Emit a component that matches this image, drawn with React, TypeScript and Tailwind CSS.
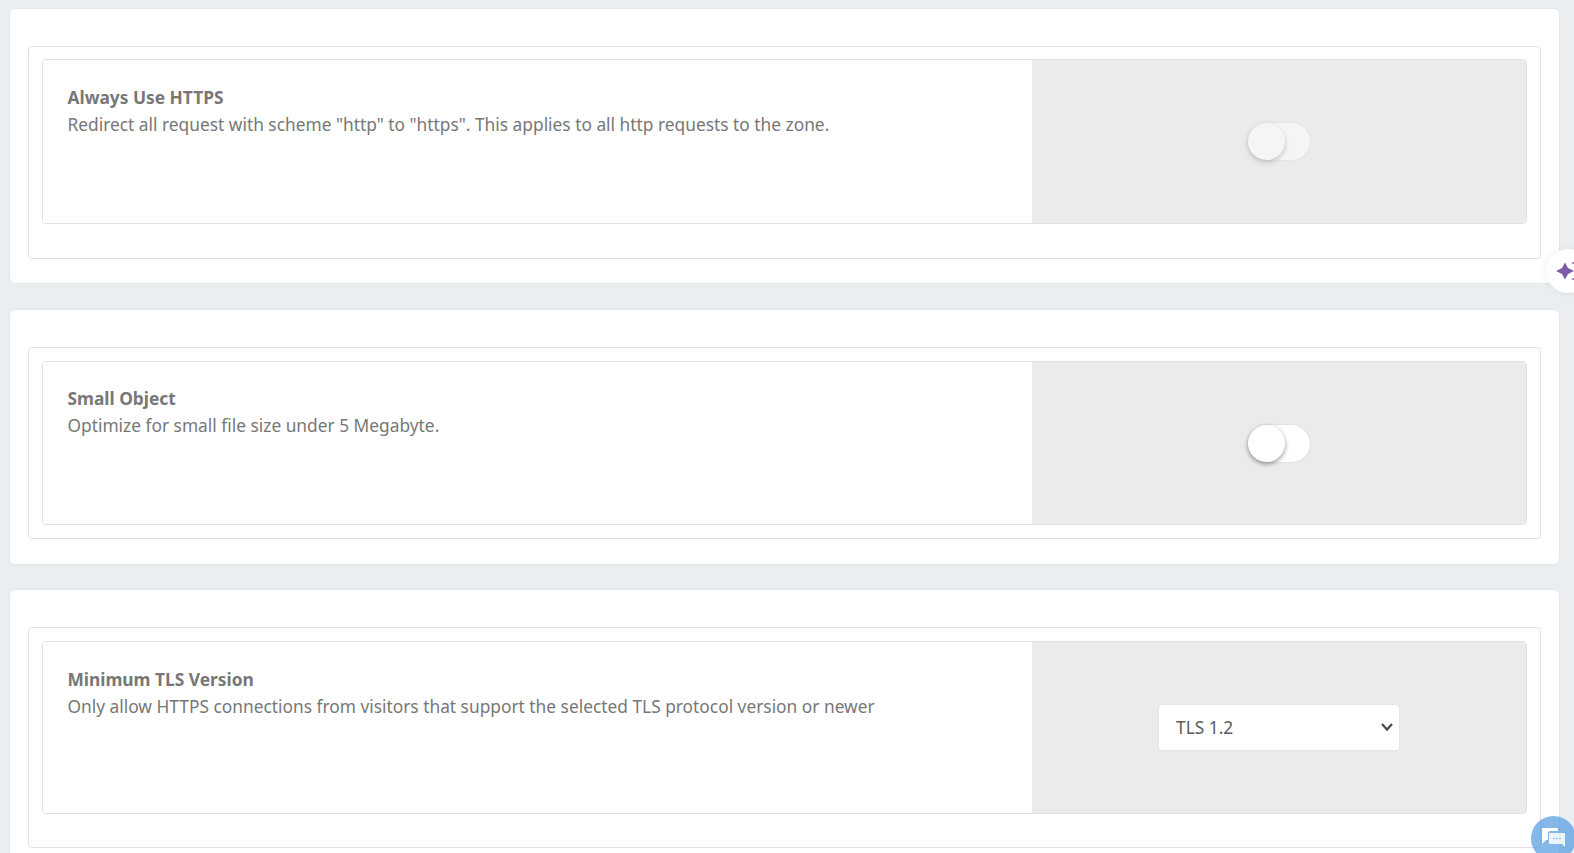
const sans = "font-['Noto_Sans','Open_Sans',sans-serif]";

function Toggle({ disabled }: { disabled?: boolean }) {
  return (
    <div className={`relative h-[37px] w-[62px] rounded-full bg-white shadow-[0_0_2px_rgba(0,0,0,0.12)] ${disabled ? "opacity-50" : ""}`}>
      <span className="absolute left-0 top-0 h-[37px] w-[37px] rounded-full bg-white shadow-[0_2px_5px_rgba(0,0,0,0.4)]" />
    </div>
  );
}

function SettingRow({
  title,
  description,
  height,
  textTop = "pt-6",
  children,
}: {
  title: string;
  description: string;
  height: string;
  textTop?: string;
  children: React.ReactNode;
}) {
  return (
    <div className={`flex overflow-hidden rounded border border-[#dfe1e6] ${height}`}>
      <div className={`w-[989px] shrink-0 bg-white pl-[24.5px] ${textTop}`}>
        <h3 className="text-[17.33px] font-bold leading-[27px] text-[#777777]">{title}</h3>
        <p className="text-[17.33px] leading-[27px] text-[#777777]">{description}</p>
      </div>
      <div className="flex flex-1 items-center justify-center bg-[#eaebed]">{children}</div>
    </div>
  );
}

export default function App() {
  return (
    <div className={`relative h-[853px] overflow-hidden bg-[#eaeef1] pl-[9px] pr-[14px] pt-[8px] ${sans}`}>
      <section className="h-[276px] rounded-md border border-[#e3e6ea] bg-white px-[18px] pt-[37px]">
        <div className="h-[213px] rounded border border-[#dfe1e6] px-[13px] pt-3">
          <SettingRow
            title="Always Use HTTPS"
            description={'Redirect all request with scheme "http" to "https". This applies to all http requests to the zone.'}
            height="h-[165px]"
          >
            <Toggle disabled />
          </SettingRow>
        </div>
      </section>

      <section className="mt-[25px] h-[256px] rounded-md border border-[#e3e6ea] bg-white px-[18px] pt-[37px]">
        <div className="h-[192px] rounded border border-[#dfe1e6] px-[13px] pt-[13px]">
          <SettingRow
            title="Small Object"
            description="Optimize for small file size under 5 Megabyte."
            height="h-[164px]"
            textTop="pt-[23px]"
          >
            <Toggle />
          </SettingRow>
        </div>
      </section>

      <section className="mt-[24px] h-[300px] rounded-md border border-[#e3e6ea] bg-white px-[18px] pt-[37px]">
        <div className="h-[221px] rounded border border-[#dfe1e6] px-[13px] pt-[13px]">
          <SettingRow
            title="Minimum TLS Version"
            description="Only allow HTTPS connections from visitors that support the selected TLS protocol version or newer"
            height="h-[173px]"
          >
            <div className="relative">
              <select
                defaultValue="TLS 1.2"
                className="block h-[47px] w-[242px] appearance-none rounded border border-[#e3e5e8] bg-white pl-[17px] text-[17.33px] text-[#5c5c5c]"
              >
                <option>TLS 1.0</option>
                <option>TLS 1.1</option>
                <option>TLS 1.2</option>
                <option>TLS 1.3</option>
              </select>
              <svg className="pointer-events-none absolute right-[7px] top-[18px]" width="12" height="10" viewBox="0 0 12 10" fill="none" stroke="#4a4a4a" strokeWidth="2.2">
                <path d="M1 2 L6 7.5 L11 2" />
              </svg>
            </div>
          </SettingRow>
        </div>
      </section>

      {/* floating assistant tab */}
      <div className="absolute left-[1546px] top-[249px] flex h-[44px] w-[44px] items-center rounded-full bg-white pl-[10px] shadow-[0_0_8px_rgba(0,0,0,0.07)]">
        <svg className="shrink-0" width="32" height="24" viewBox="0 0 32 24" fill="#7f5aa8">
          <path d="M9 3.5 L12 9 L18 12 L12 15 L9 20.5 L6 15 L0 12 L6 9Z" />
          <path d="M20 0 L21.2 2.8 L25 4 L21.2 5.2 L20 8 L18.8 5.2 L15 4 L18.8 2.8Z" />
          <path d="M20 16 L21.2 18.8 L25 20 L21.2 21.2 L20 24 L18.8 21.2 L15 20 L18.8 18.8Z" />
        </svg>
      </div>

      {/* chat bubble */}
      <div className="absolute left-[1531px] top-[816px] h-[45px] w-[45px] rounded-full bg-[#5c9fe0]/75">
        <svg className="absolute left-[10px] top-[11px]" width="26" height="24" viewBox="0 0 26 24">
          <path d="M2 1 H16 Q17 1 17 2 V4 H9 Q7 4 7 6 V13 H5 L1 17 V2 Q1 1 2 1Z" fill="#fff" />
          <path d="M9 6 H23 Q24 6 24 7 V20 L21 17 H9 Q8 17 8 16 V7 Q8 6 9 6Z" fill="#fff" fillOpacity="0.85" />
          <circle cx="13" cy="11.5" r="0.8" fill="#7aaee3" />
          <circle cx="16" cy="11.5" r="0.8" fill="#7aaee3" />
          <circle cx="19" cy="11.5" r="0.8" fill="#7aaee3" />
        </svg>
      </div>
    </div>
  );
}
